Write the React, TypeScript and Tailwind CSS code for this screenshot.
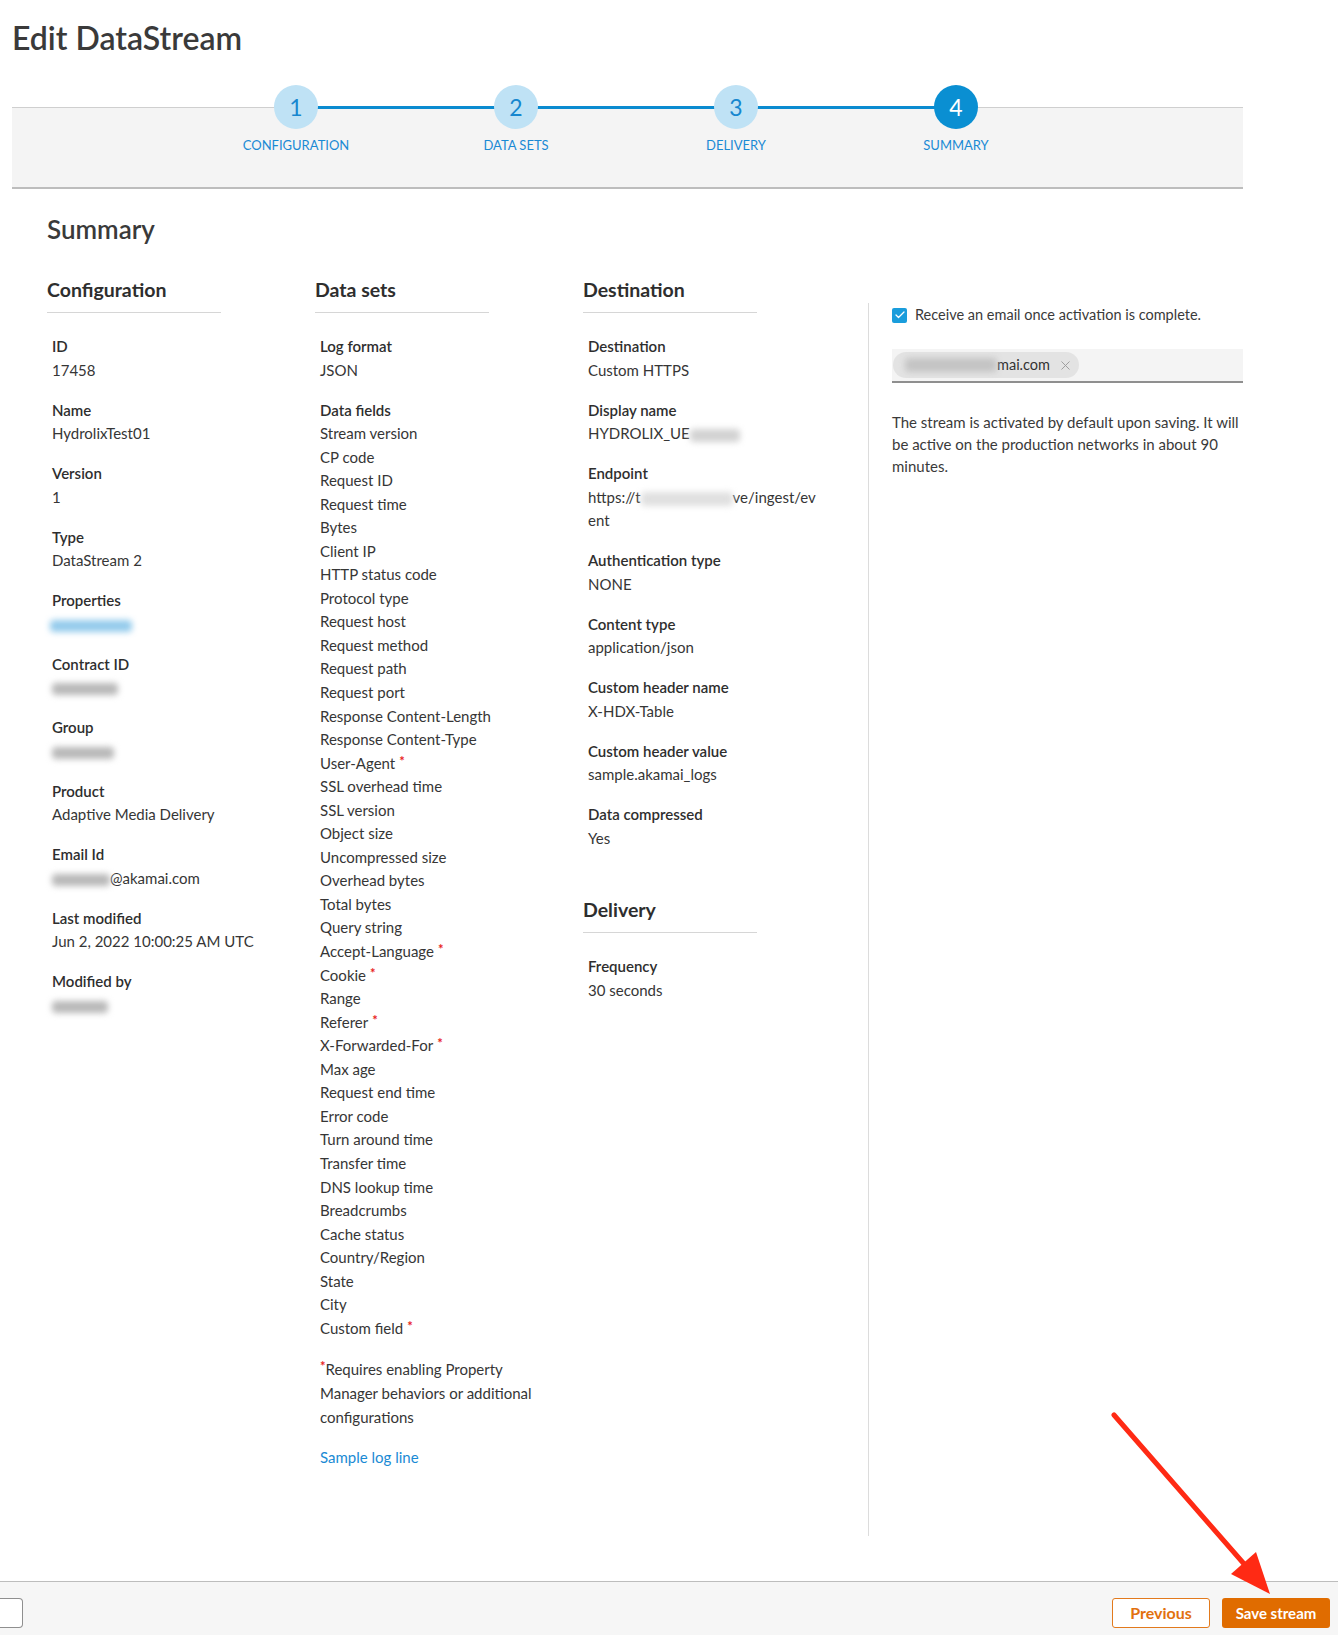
import { X, Check } from "lucide-react";

type Field = { label: string; value: React.ReactNode };

const blurGray = "inline-block h-[12px] rounded-sm bg-[#b8b8b8] blur-[3px] align-middle";

const configFields: Field[] = [
  { label: "ID", value: "17458" },
  { label: "Name", value: "HydrolixTest01" },
  { label: "Version", value: "1" },
  { label: "Type", value: "DataStream 2" },
  {
    label: "Properties",
    value: <span className="inline-block h-[12px] w-[82px] -ml-[2px] rounded-sm bg-[#94cbec] blur-[3px] align-middle" />,
  },
  { label: "Contract ID", value: <span className={`${blurGray} w-[66px]`} /> },
  { label: "Group", value: <span className={`${blurGray} w-[62px]`} /> },
  { label: "Product", value: "Adaptive Media Delivery" },
  {
    label: "Email Id",
    value: (
      <>
        <span className={`${blurGray} w-[58px]`} />
        @akamai.com
      </>
    ),
  },
  { label: "Last modified", value: "Jun 2, 2022 10:00:25 AM UTC" },
  { label: "Modified by", value: <span className={`${blurGray} w-[56px]`} /> },
];

const dataFields: [string, boolean][] = [
  ["Stream version", false],
  ["CP code", false],
  ["Request ID", false],
  ["Request time", false],
  ["Bytes", false],
  ["Client IP", false],
  ["HTTP status code", false],
  ["Protocol type", false],
  ["Request host", false],
  ["Request method", false],
  ["Request path", false],
  ["Request port", false],
  ["Response Content-Length", false],
  ["Response Content-Type", false],
  ["User-Agent", true],
  ["SSL overhead time", false],
  ["SSL version", false],
  ["Object size", false],
  ["Uncompressed size", false],
  ["Overhead bytes", false],
  ["Total bytes", false],
  ["Query string", false],
  ["Accept-Language", true],
  ["Cookie", true],
  ["Range", false],
  ["Referer", true],
  ["X-Forwarded-For", true],
  ["Max age", false],
  ["Request end time", false],
  ["Error code", false],
  ["Turn around time", false],
  ["Transfer time", false],
  ["DNS lookup time", false],
  ["Breadcrumbs", false],
  ["Cache status", false],
  ["Country/Region", false],
  ["State", false],
  ["City", false],
  ["Custom field", true],
];

const destinationFields: Field[] = [
  { label: "Destination", value: "Custom HTTPS" },
  {
    label: "Display name",
    value: (
      <>
        HYDROLIX_UE
        <span className="inline-block h-[13px] w-[50px] rounded-sm bg-[#d2d2d2] blur-[3px] align-middle" />
      </>
    ),
  },
  {
    label: "Endpoint",
    value: (
      <>
        https://t
        <span className="inline-block h-[14px] w-[92px] rounded-sm bg-[#e0e0e0] blur-[3px] align-middle" />
        ve/ingest/ev
        <br />
        ent
      </>
    ),
  },
  { label: "Authentication type", value: "NONE" },
  { label: "Content type", value: "application/json" },
  { label: "Custom header name", value: "X-HDX-Table" },
  { label: "Custom header value", value: "sample.akamai_logs" },
  { label: "Data compressed", value: "Yes" },
];

const steps = [
  { n: 1, label: "CONFIGURATION" },
  { n: 2, label: "DATA SETS" },
  { n: 3, label: "DELIVERY" },
  { n: 4, label: "SUMMARY" },
];

function Asterisk() {
  return <span className="ml-[4px] align-top text-[13px] font-bold leading-[18px] text-[#e8221b]">*</span>;
}

function FieldBlock({ label, value }: Field) {
  return (
    <div className="mb-[16.5px]">
      <div className="font-semibold leading-[23.5px] text-[#2e2e2e]">{label}</div>
      <div className="leading-[23.5px]">{value}</div>
    </div>
  );
}

function ColumnHeading({ children }: { children: React.ReactNode }) {
  return (
    <h3 className="w-[174px] border-b border-[#d6d6d6] pb-[10px] text-[19.5px] font-bold leading-[24px] text-[#2e2e2e]">
      {children}
    </h3>
  );
}

export default function App() {
  return (
    <div className="relative flex h-[1635px] w-[1338px] flex-col overflow-hidden bg-white font-['Lato','Liberation_Sans',sans-serif] text-[15px] text-[#363636]">
      <div className="flex-1">
        {/* Title */}
        <h1 className="pl-[12px] pt-[20px] text-[32px] font-semibold leading-[36px] text-[#3a3a3a]">Edit DataStream</h1>

        {/* Stepper */}
        <div className="relative ml-[12px] mt-[51px] h-[82px] w-[1231px] border-t border-b-2 border-t-[#cfcfcf] border-b-[#bdbdbd] bg-[#f4f4f4]">
          <div className="absolute left-[284px] top-[-2px] h-[3px] w-[660px] bg-[#0a8bd0]" />
          <div className="relative -mt-[23px] flex pl-[174px]">
            {steps.map((s) => (
              <div key={s.n} className="flex w-[220px] flex-col items-center">
                <div
                  className={
                    s.n === 4
                      ? "flex h-[44px] w-[44px] items-center justify-center rounded-full bg-[#0a8fd2] text-[23px] text-white"
                      : "flex h-[44px] w-[44px] items-center justify-center rounded-full bg-[#bfe2f5] text-[23px] text-[#1787cf]"
                  }
                >
                  {s.n}
                </div>
                <div className="mt-[8px] text-[13px] leading-[16px] text-[#1a8ad4]">{s.label}</div>
              </div>
            ))}
          </div>
        </div>

        {/* Summary */}
        <div className="pl-[47px]">
          <h2 className="mt-[25px] text-[26px] font-semibold leading-[30px] text-[#3a3a3a]">Summary</h2>

          <div className="mt-[34px] flex items-start">
            {/* Configuration */}
            <div className="w-[268px]">
              <ColumnHeading>Configuration</ColumnHeading>
              <div className="pl-[5px] pt-[22px]">
                {configFields.map((f) => (
                  <FieldBlock key={f.label} {...f} />
                ))}
              </div>
            </div>

            {/* Data sets */}
            <div className="w-[268px]">
              <ColumnHeading>Data sets</ColumnHeading>
              <div className="pl-[5px] pt-[22px]">
                <FieldBlock label="Log format" value="JSON" />
                <div className="font-semibold leading-[23.5px] text-[#2e2e2e]">Data fields</div>
                <ul className="leading-[23.55px]">
                  {dataFields.map(([name, star]) => (
                    <li key={name}>
                      {name}
                      {star && <Asterisk />}
                    </li>
                  ))}
                </ul>
                <p className="mt-[16.5px] leading-[24px]">
                  <span className="align-top text-[13px] font-bold leading-[18px] text-[#e8221b]">*</span>Requires enabling
                  Property
                  <br />
                  Manager behaviors or additional
                  <br />
                  configurations
                </p>
                <a className="mt-[16px] block leading-[24px] text-[#1a8ad4]">Sample log line</a>
              </div>
            </div>

            {/* Destination + Delivery */}
            <div className="w-[285px]">
              <ColumnHeading>Destination</ColumnHeading>
              <div className="pl-[5px] pt-[22px]">
                {destinationFields.map((f) => (
                  <FieldBlock key={f.label} {...f} />
                ))}
              </div>
              <div className="mt-[48px]">
                <ColumnHeading>Delivery</ColumnHeading>
                <div className="pl-[5px] pt-[22px]">
                  <FieldBlock label="Frequency" value="30 seconds" />
                </div>
              </div>
            </div>

            {/* Activation panel */}
            <div className="mt-[25px] h-[1233px] w-[375px] border-l border-[#dcdcdc] pl-[23px] pt-[2px]">
              <label className="flex h-[20px] items-center gap-[8px] text-[14.5px] text-[#3a3a3a]">
                <span className="flex h-[15px] w-[15px] items-center justify-center rounded-[2px] bg-[#1a9ddc]">
                  <Check size={12} strokeWidth={2.5} className="text-white" />
                </span>
                Receive an email once activation is complete.
              </label>
              <div className="mt-[24px] flex h-[34px] items-center border-b-2 border-[#8f8f8f] bg-[#f4f4f4] pl-[1px]">
                <span className="flex h-[26px] w-[186px] items-center rounded-full bg-[#e3e3e3] pl-[12px] text-[14.5px] text-[#333]">
                  <span className="inline-block h-[14px] w-[92px] rounded-sm bg-[#c4c4c4] blur-[3px]" />
                  <span>mai.com</span>
                  <X size={15} strokeWidth={1.5} className="ml-[8px] text-[#9a9a9a]" />
                </span>
              </div>
              <p className="mt-[28px] w-[351px] text-[15px] leading-[22px] text-[#3a3a3a]">
                The stream is activated by default upon saving. It will be active on the production networks in about 90
                minutes.
              </p>
            </div>
          </div>
        </div>
      </div>

      {/* Footer */}
      <div className="flex h-[54px] items-start border-t border-[#bdbdbd] bg-[#f6f6f6] pt-[16px] pr-[8px]">
        <div className="h-[30px] w-[23px] rounded-r-[4px] border border-l-0 border-[#8f8f8f] bg-white" />
        <button className="ml-auto h-[30px] w-[98px] rounded-[3px] border border-[#e27a1d] bg-white text-[16px] font-bold text-[#e2710f]">
          Previous
        </button>
        <button className="ml-[12px] h-[30px] w-[108px] rounded-[3px] bg-[#e06c00] text-[15px] font-bold text-white">
          Save stream
        </button>
      </div>

      {/* Annotation arrow */}
      <svg className="pointer-events-none absolute inset-0" width="1338" height="1635" viewBox="0 0 1338 1635">
        <line x1="1114" y1="1415" x2="1245" y2="1565" stroke="#ff2a14" strokeWidth="5" strokeLinecap="round" />
        <polygon points="1270,1594 1231,1574 1256,1552" fill="#ff2a14" />
      </svg>
    </div>
  );
}
